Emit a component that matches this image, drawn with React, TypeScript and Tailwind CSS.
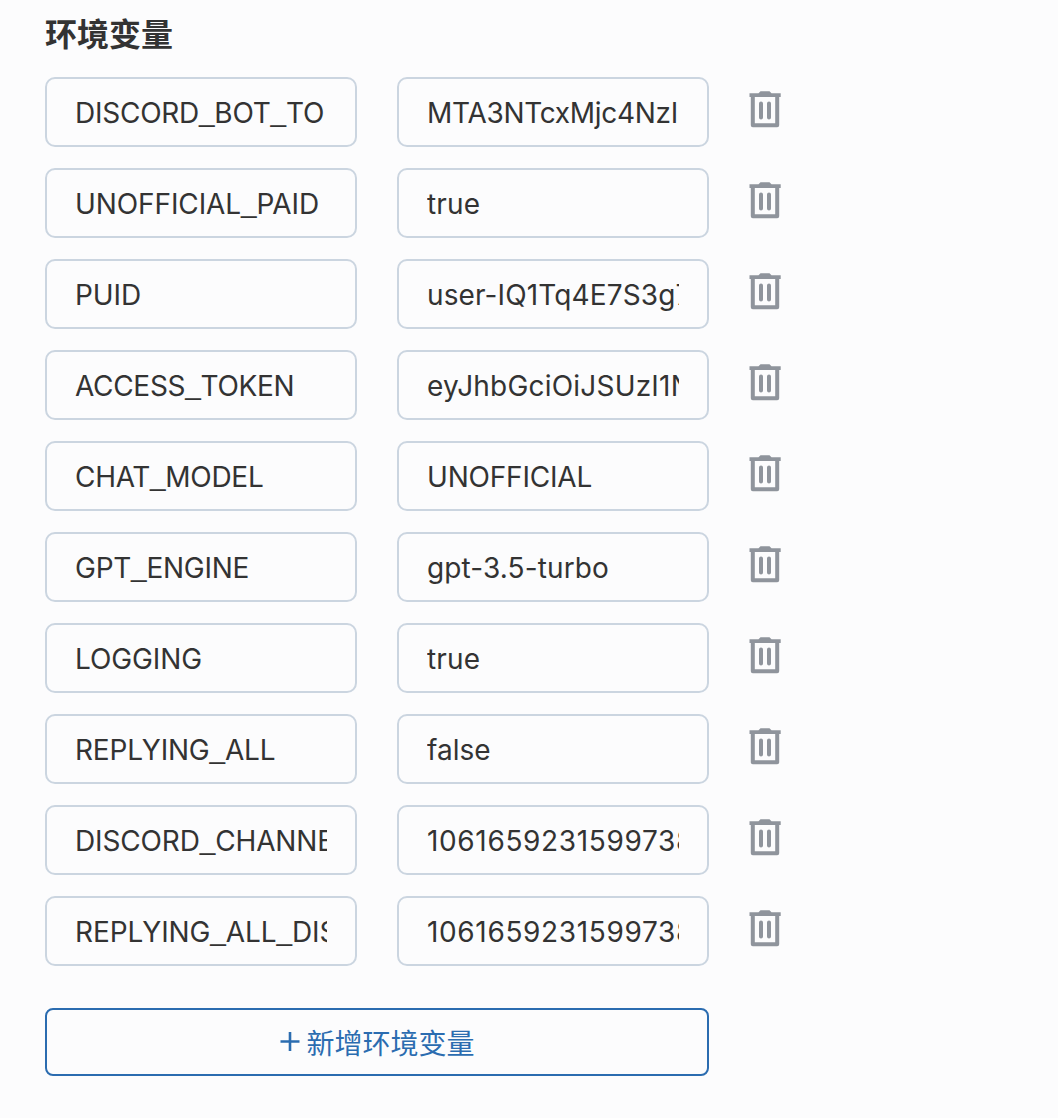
import { Fragment } from 'react';

const rows = [
  { name: 'DISCORD_BOT_TO', nameTracking: 'tracking-[-0.25px]', value: 'MTA3NTcxMjc4NzI', tracking: 'tracking-[-0.3px]' },
  { name: 'UNOFFICIAL_PAID', nameTracking: 'tracking-[-0.1px]', value: 'true', tracking: 'tracking-[0.2px]' },
  { name: 'PUID', nameTracking: 'tracking-[-0.1px]', value: 'user-IQ1Tq4E7S3g7', tracking: 'tracking-[0.12px]' },
  { name: 'ACCESS_TOKEN', nameTracking: 'tracking-[-0.3px]', value: 'eyJhbGciOiJSUzI1N', tracking: 'tracking-[0.2px]' },
  { name: 'CHAT_MODEL', nameTracking: 'tracking-[-0.3px]', value: 'UNOFFICIAL', tracking: 'tracking-[-0.2px]' },
  { name: 'GPT_ENGINE', nameTracking: 'tracking-[-0.25px]', value: 'gpt-3.5-turbo', tracking: 'tracking-[0.12px]' },
  { name: 'LOGGING', nameTracking: 'tracking-[-0.1px]', value: 'true', tracking: 'tracking-[0.2px]' },
  { name: 'REPLYING_ALL', nameTracking: 'tracking-[-0.2px]', value: 'false', tracking: 'tracking-[0px]' },
  { name: 'DISCORD_CHANNEL', nameTracking: 'tracking-[-0.15px]', value: '1061659231599738', tracking: 'tracking-[0.65px]' },
  { name: 'REPLYING_ALL_DISC', nameTracking: 'tracking-[-0.1px]', value: '1061659231599738', tracking: 'tracking-[0.65px]' },
];

function Trash() {
  return (
    <svg width="33" height="38" viewBox="0 0 33 38" fill="none" stroke="#8f949c" strokeWidth="4">
      <path d="M0.5 2.3H9.5L11.5 0.3H20.5L22.5 2.3H31.7V6H0.5Z" fill="#8f949c" stroke="none" />
      <path d="M3.8 5V34.3H28.2V5" strokeLinejoin="round" />
      <path d="M12 12.6V26.4M20 12.6V26.4" strokeLinecap="round" />
    </svg>
  );
}

function Field({ text, tracking }: { text: string; tracking: string }) {
  return (
    <div className="h-[70px] w-[312px] rounded-[10px] border-2 border-[#cbd5e0] px-7">
      <div className={`h-full overflow-hidden whitespace-nowrap text-[28px] leading-[68px] ${tracking}`}>
        {text.split('_').map((part, i) => (
          <Fragment key={i}>
            {i > 0 && <span className="relative -top-0.5 font-['Liberation_Sans',sans-serif] leading-none">_</span>}
            {part}
          </Fragment>
        ))}
      </div>
    </div>
  );
}

export default function App() {
  return (
    <main className="h-[1118px] w-[1058px] overflow-hidden bg-[#fcfcfd] px-[45px] pt-[11px] font-['Inter','Noto_Sans_CJK_SC',sans-serif] text-[#333333]">
      <h1 className="mb-[18px] h-12 text-[32px] font-bold leading-[48px]">环境变量</h1>
      <div className="flex flex-col gap-[21px]">
        {rows.map((row) => (
          <div key={row.name} className="flex h-[70px] gap-10">
            <Field text={row.name} tracking={row.nameTracking} />
            <Field text={row.value} tracking={row.tracking} />
            <div className="pt-[14px]"><Trash /></div>
          </div>
        ))}
      </div>
      <button className="mt-[42px] flex h-[68px] w-[664px] items-center justify-center gap-[6px] rounded-lg border-2 border-[#2b6cb0] text-[28px] text-[#2b6cb0]">
        <svg className="ml-px" width="20" height="20" viewBox="0 0 20 20" stroke="currentColor" strokeWidth="2.6"><path d="M0.5 9.5H19.5M10 0V19" /></svg>
        <span className="pt-1 font-normal">新增环境变量</span>
      </button>
    </main>
  );
}
